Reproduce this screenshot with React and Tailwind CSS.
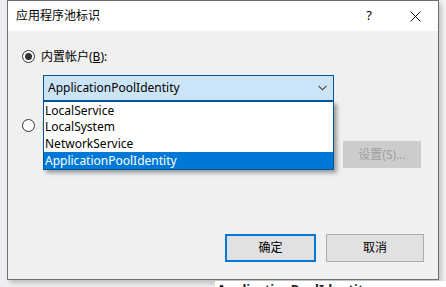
import React from "react";

const font = { fontFamily: '"Noto Sans", "Noto Sans CJK SC", sans-serif' };

function Radio({ checked }) {
  return (
    <span className="relative inline-flex h-[13px] w-[13px] items-center justify-center rounded-full border border-[#333] bg-white">
      {checked && <span className="h-[7px] w-[7px] rounded-full bg-[#333]" />}
    </span>
  );
}

export default function App() {
  return (
    <div
      className="relative h-[287px] w-[446px] overflow-hidden bg-[#f4f4f6] text-[12px] text-black"
      style={font}
    >
      <div className="absolute left-0 top-0 h-full w-[7px] bg-[#eeeef2]" />
      <div className="absolute bottom-0 left-[215px] h-[6px] w-[231px] bg-white overflow-hidden">
        <div className="pl-[2px] pt-[1px] text-[13px] font-bold leading-[14px] text-[#222]">ApplicationPoolIdentity</div>
      </div>
      <div className="ml-[7px] flex h-[280px] w-[432px] flex-col border border-[#6e6e6e] bg-[#f0f0f0] shadow-[2px_3px_6px_rgba(0,0,0,0.25)]">
        {/* title bar */}
        <div className="flex h-[30px] items-center bg-white">
          <div className="pl-[8px] text-[12px] leading-none">应用程序池标识</div>
          <div className="ml-auto flex h-full items-center">
            <span className="w-[46px] text-center text-[13px]">?</span>
            <span className="flex w-[46px] items-center justify-center">
              <svg width="11" height="11" viewBox="0 0 11 11" fill="none" stroke="#111" strokeWidth="1">
                <path d="M0.5 0.5 L10.5 10.5 M10.5 0.5 L0.5 10.5" />
              </svg>
            </span>
          </div>
        </div>
        {/* body */}
        <div className="relative flex-1">
          <div className="flex items-center gap-[6px] pl-[14px] pt-[19px]">
            <Radio checked />
            <span className="leading-none">内置帐户(<span className="underline">B</span>):</span>
          </div>
          <div className="ml-[35px] mt-[12px] flex h-[26px] w-[291px] items-center border border-[#005499] bg-[#cce4f7] pl-[4px] pr-[6px]">
            <span>ApplicationPoolIdentity</span>
            <svg className="ml-auto" width="9" height="6" viewBox="0 0 9 6" fill="none" stroke="#444" strokeWidth="1.1">
              <path d="M0.5 0.8 L4.5 4.8 L8.5 0.8" />
            </svg>
          </div>
          <div className="mt-[18px] flex items-center gap-[6px] pl-[14px]">
            <Radio />
            <span className="leading-none text-[#b56b1a]">自定义帐户(C):</span>
          </div>
          <div className="ml-[335px] mt-[9px] flex h-[27px] w-[78px] items-center justify-center border border-[#cccccc] bg-[#cccccc] text-[#a0a0a0]">
            设置(S)...
          </div>
          {/* dropdown list */}
          <div className="absolute left-[35px] top-[70px] w-[291px] border border-[#005499] bg-white shadow-[3px_3px_4px_rgba(0,0,0,0.35)]">
            <div className="flex h-[17px] items-center pl-[1px]">LocalService</div>
            <div className="flex h-[16px] items-center pl-[1px]">LocalSystem</div>
            <div className="flex h-[17px] items-center pl-[1px]">NetworkService</div>
            <div className="flex h-[17px] items-center bg-[#0078d7] pl-[1px] text-white">ApplicationPoolIdentity</div>
          </div>
          {/* buttons */}
          <div className="absolute bottom-[17px] right-[14px] flex gap-[10px]">
            <div className="flex h-[28px] w-[91px] items-center justify-center border-2 border-[#0078d7] bg-[#e1e1e1]">确定</div>
            <div className="flex h-[28px] w-[98px] items-center justify-center border border-[#adadad] bg-[#e1e1e1]">取消</div>
          </div>
        </div>
      </div>
    </div>
  );
}
